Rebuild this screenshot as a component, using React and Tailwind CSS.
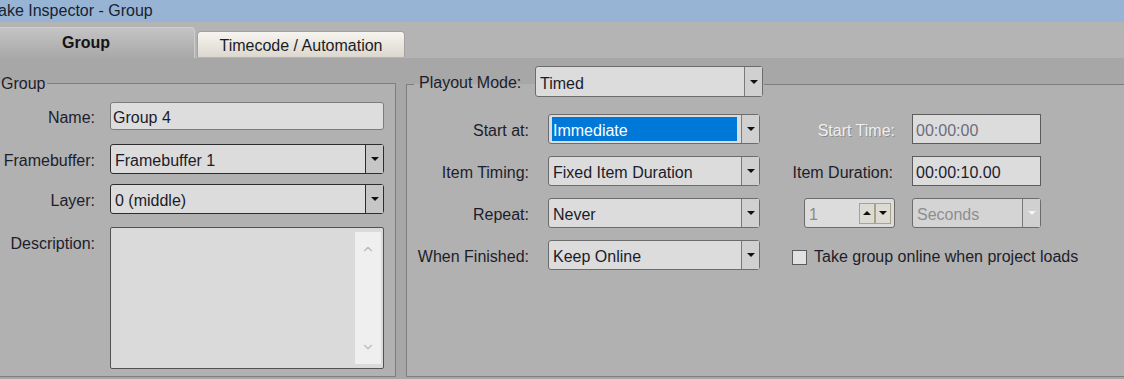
import React from 'react';
import { ChevronUp, ChevronDown } from 'lucide-react';

const FONT = "font-['Liberation_Sans',Arial,sans-serif]";

const Caret = ({ light }) => (
  <span className={`h-0 w-0 border-x-[4px] border-t-[4px] border-x-transparent ${light ? 'border-t-[#f4f4f4]' : 'border-t-[#111]'}`} />
);

const Select = ({ value, width, dark, disabled, selected, height = 'h-[30px]' }) => (
  <div className={`flex ${height} ${width} shrink-0 rounded-[3px] border ${dark ? 'border-[#2c2c2c]' : 'border-[#6c6c6c]'} ${disabled ? 'bg-[#d4d4d4]' : 'bg-[#dcdcdc]'}`}>
    <div className="flex min-w-0 flex-1 items-center pl-[3px] pr-[4px]">
      {selected ? (
        <span className="flex h-[24px] flex-1 items-center bg-[#0078d7] pl-[1px] pt-[4px] text-white">{value}</span>
      ) : (
        <span className={`pl-[1px] pt-[4px] whitespace-nowrap ${disabled ? 'text-[#8e8e8e]' : 'text-[#1b1b2b]'}`}>{value}</span>
      )}
    </div>
    <div className={`flex w-[18px] items-center justify-center border-l ${dark ? 'border-[#2c2c2c] bg-[#c6c6c6]' : 'border-[#7a7a7a] bg-[#d0d0d0]'}`}>
      <Caret light={disabled} />
    </div>
  </div>
);

const TimeBox = ({ value, muted }) => (
  <div className={`flex h-[30px] w-[129px] items-center border border-[#5c5c5c] bg-[#dcdcdc] pl-[3px] pt-[4px] ${muted ? 'text-[#6c6c80]' : 'text-[#1b1b30]'}`}>
    {value}
  </div>
);

const SpinButton = ({ up }) => (
  <div className="flex h-[21px] w-[16px] items-center justify-center border border-[#aaa28a] bg-[#dcdbd4]">
    <span className={`h-0 w-0 border-x-[4px] border-x-transparent ${up ? 'border-b-[4px] border-b-[#111]' : 'border-t-[4px] border-t-[#111]'}`} />
  </div>
);

const LeftRow = ({ label, children, className = '', top }) => (
  <div className={`flex ${top ? 'items-start' : 'items-center'} ${className}`}>
    <div className={`w-[99px] shrink-0 pr-[1px] text-right whitespace-nowrap ${top ? 'mt-[7px]' : 'pt-[4px]'}`}>{label}</div>
    <div className="ml-[14px]">{children}</div>
  </div>
);

export default function App() {
  return (
    <div className={`h-[379px] w-[1124px] overflow-hidden bg-[#a7a7a7] text-[16px] leading-[20px] text-[#1d1d2b] ${FONT}`}>
      {/* window title */}
      <div className="flex h-[22px] items-center bg-[#98b4d4] text-[#172232]">
        <span className="-ml-[10px] whitespace-nowrap">Take Inspector - Group</span>
      </div>

      {/* tabs */}
      <div className="flex h-[36px] items-end bg-[#b4b4b4]">
        <div className="-ml-[22px] flex h-[31px] w-[217px] items-center justify-center rounded-tr-[4px] border-t border-r border-[#cdcdcd] bg-gradient-to-b from-[#c4c4c4] to-[#a8a8a8] pb-[1px] font-bold text-[#141414]">
          Group
        </div>
        <div className="mb-[1px] ml-[2px] flex h-[26px] w-[208px] items-center justify-center rounded-t-[4px] border border-b-0 border-[#a2a2a2] bg-gradient-to-b from-[#f7f5f0] to-[#dcd8cf] pt-[2px] text-[#1c1c24]">
          Timecode / Automation
        </div>
      </div>

      {/* panel */}
      <div className="flex h-[321px] items-start gap-[10px] pt-[8px]">
        <fieldset className="-ml-[4px] mt-[7px] h-[304px] w-[400px] shrink-0 border border-[#7e7e7e] bg-[#b1b1b1]">
          <legend className="ml-[2px] px-[2px] leading-[20px]">
            <span className="inline-block translate-y-[1px]">Group</span>
          </legend>
          <div className="mt-[9px] flex flex-col">
            <LeftRow label="Name:">
              <div className="flex h-[28px] w-[274px] items-center rounded-[3px] border border-[#7c7c7c] bg-[#dddddd] pl-[2px] pt-[4px] text-[#1b1b2b]">
                Group 4
              </div>
            </LeftRow>
            <LeftRow label="Framebuffer:" className="mt-[14px]">
              <Select value="Framebuffer 1" width="w-[274px]" dark />
            </LeftRow>
            <LeftRow label="Layer:" className="mt-[10px]">
              <Select value="0 (middle)" width="w-[274px]" dark />
            </LeftRow>
            <LeftRow label="Description:" className="mt-[13px]" top>
              <div className="flex h-[142px] w-[274px] justify-end rounded-[2px] border border-[#525252] bg-[#dadada] py-[4px] pr-[2px]">
                <div className="flex w-[26px] flex-col items-center justify-between bg-[#efefef] py-[10px]">
                  <ChevronUp size={14} strokeWidth={2} className="text-[#b9b9b9]" />
                  <ChevronDown size={14} strokeWidth={2} className="text-[#b9b9b9]" />
                </div>
              </div>
            </LeftRow>
          </div>
        </fieldset>

        <fieldset className="h-[311px] w-[730px] shrink-0 border border-[#7e7e7e] bg-[#b1b1b1]">
          <legend className="ml-[7px] pb-[5px] pl-[5px] pr-[1px]">
            <div className="flex items-center">
              <span className="w-[116px] pt-[2px] whitespace-nowrap">Playout Mode:</span>
              <Select value="Timed" width="w-[228px]" height="h-[31px]" />
            </div>
          </legend>

          <div className="mt-[12px] flex flex-col gap-[12px]">
            <div className="flex h-[30px] items-center">
              <div className="w-[122px] pt-[4px] text-right">Start at:</div>
              <div className="ml-[19px]"><Select value="Immediate" width="w-[212px]" selected /></div>
              <div className="w-[135px] pt-[4px] text-right text-[#eeeeee] [text-shadow:1px_1px_0_rgba(0,0,0,0.22)]">Start Time:</div>
              <div className="ml-[17px]"><TimeBox value="00:00:00" muted /></div>
            </div>
            <div className="flex h-[30px] items-center">
              <div className="w-[122px] pt-[4px] text-right">Item Timing:</div>
              <div className="ml-[19px]"><Select value="Fixed Item Duration" width="w-[212px]" /></div>
              <div className="w-[135px] pr-[2px] pt-[4px] text-right">Item Duration:</div>
              <div className="ml-[17px]"><TimeBox value="00:00:10.00" /></div>
            </div>
            <div className="flex h-[30px] items-center">
              <div className="w-[122px] pt-[4px] text-right">Repeat:</div>
              <div className="ml-[19px]"><Select value="Never" width="w-[212px]" /></div>
              <div className="flex w-[135px] justify-end">
                <div className="flex h-[30px] w-[91px] items-center justify-between rounded-[3px] border border-[#6c6c6c] bg-[#dcdcdc] pl-[4px] pr-[3px]">
                  <span className="pt-[4px] text-[#8f8a7c]">1</span>
                  <div className="flex">
                    <SpinButton up />
                    <SpinButton />
                  </div>
                </div>
              </div>
              <div className="ml-[17px]"><Select value="Seconds" width="w-[129px]" disabled /></div>
            </div>
            <div className="flex h-[30px] items-center">
              <div className="w-[122px] pt-[4px] text-right whitespace-nowrap">When Finished:</div>
              <div className="ml-[19px]"><Select value="Keep Online" width="w-[212px]" /></div>
              <div className="ml-[32px] flex items-center gap-[7px] whitespace-nowrap">
                <span className="mt-[4px] h-[15px] w-[15px] border border-[#5c5c5c] bg-[#e2e2e2]" />
                <span className="pt-[4px]">Take group online when project loads</span>
              </div>
            </div>
          </div>
        </fieldset>
      </div>
    </div>
  );
}
